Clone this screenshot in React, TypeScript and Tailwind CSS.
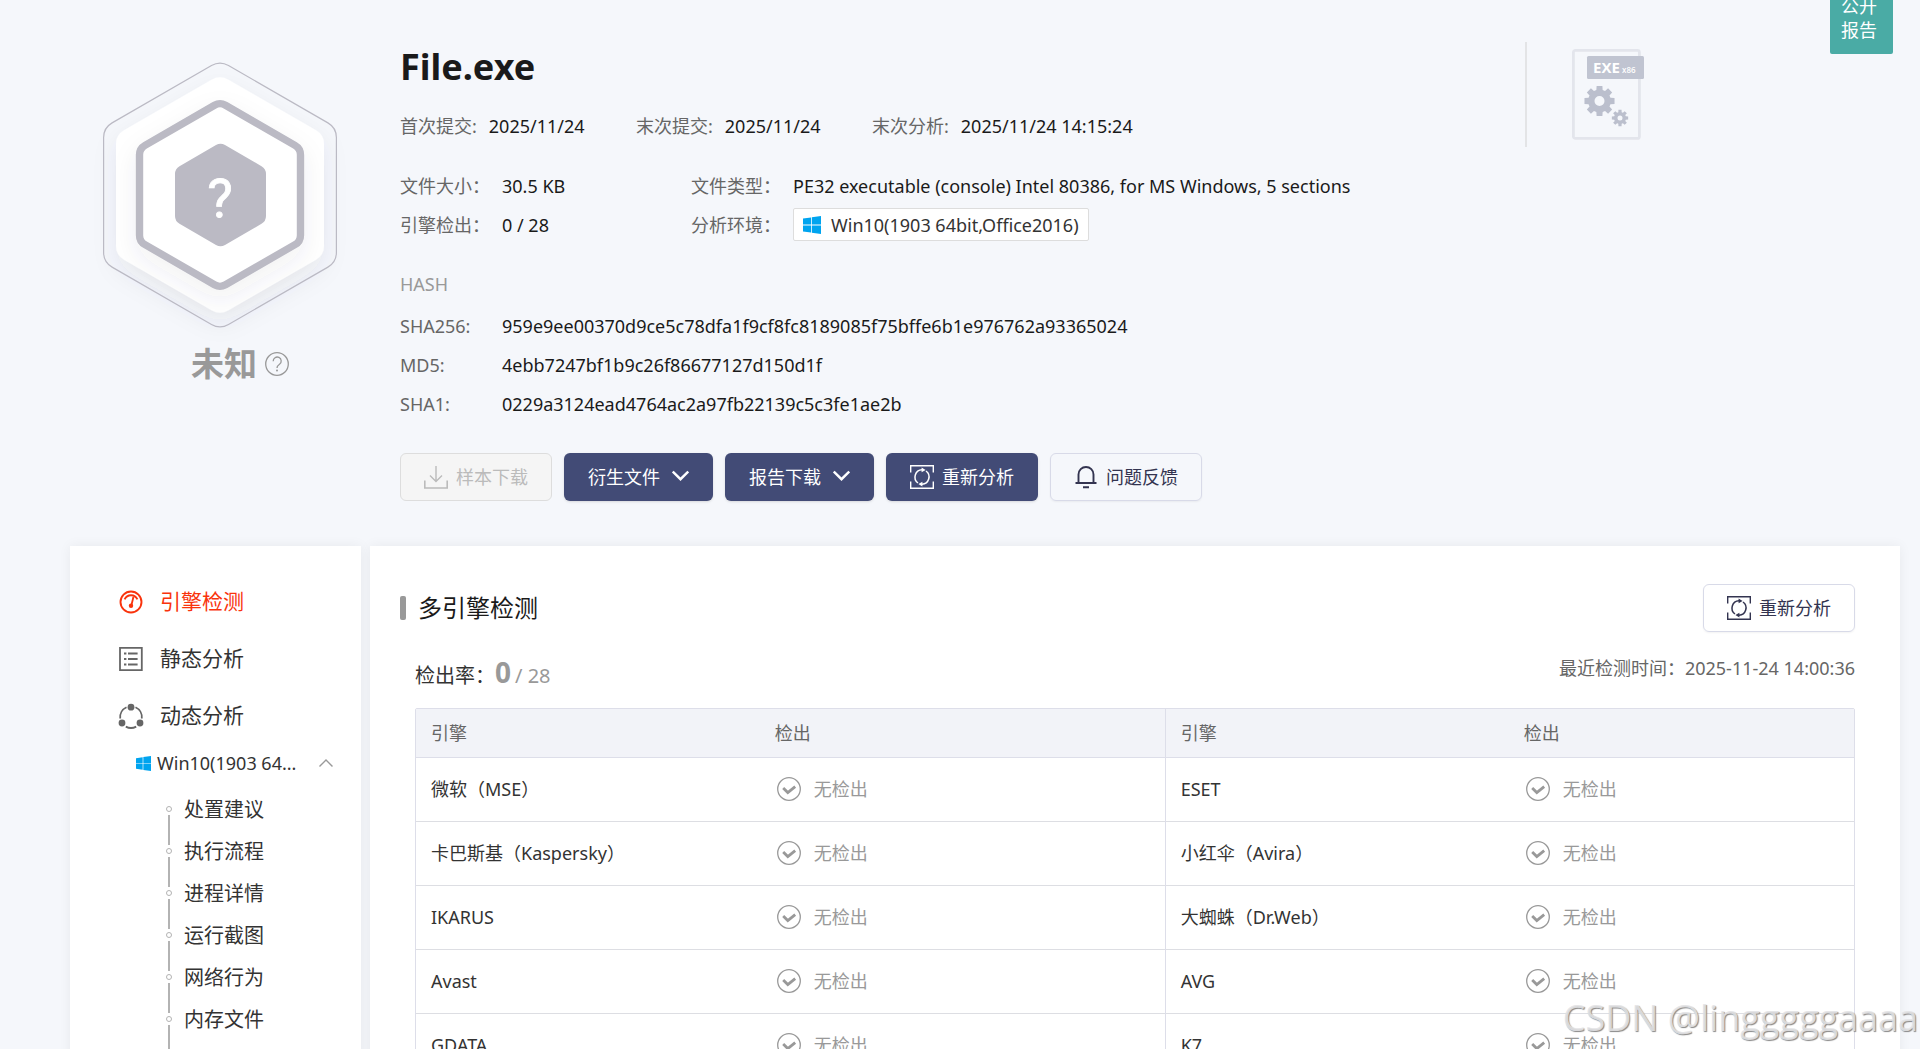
import type { ReactNode } from 'react';

const menuItems = ['处置建议', '执行流程', '进程详情', '运行截图', '网络行为', '内存文件'];

const engines = [
  ['微软（MSE）', 'ESET'],
  ['卡巴斯基（Kaspersky）', '小红伞（Avira）'],
  ['IKARUS', '大蜘蛛（Dr.Web）'],
  ['Avast', 'AVG'],
  ['GDATA', 'K7'],
];

const dates = [
  ['首次提交:', '2025/11/24'],
  ['末次提交:', '2025/11/24'],
  ['末次分析:', '2025/11/24 14:15:24'],
];

const hashes = [
  ['SHA256:', '959e9ee00370d9ce5c78dfa1f9cf8fc8189085f75bffe6b1e976762a93365024'],
  ['MD5:', '4ebb7247bf1b9c26f86677127d150d1f'],
  ['SHA1:', '0229a3124ead4764ac2a97fb22139c5c3fe1ae2b'],
];

// Pointy-top hexagon with rounded corners
function hexPath(cx: number, cy: number, halfWidth: number, radius: number) {
  const R = halfWidth / Math.cos(Math.PI / 6);
  const t = (radius * 0.577) / R;
  const points = Array.from({ length: 6 }, (_, i) => {
    const a = (Math.PI / 3) * i - Math.PI / 2;
    return [cx + R * Math.cos(a), cy + R * Math.sin(a)];
  });
  const mix = (a: number[], b: number[]) =>
    `${(a[0] + (b[0] - a[0]) * t).toFixed(2)} ${(a[1] + (b[1] - a[1]) * t).toFixed(2)}`;
  return (
    points
      .map((p, i) => {
        const prev = points[(i + 5) % 6];
        const next = points[(i + 1) % 6];
        return `${i === 0 ? 'M' : 'L'}${mix(p, prev)}A${radius} ${radius} 0 0 1 ${mix(p, next)}`;
      })
      .join('') + 'Z'
  );
}

function UnknownHexagon() {
  return (
    <svg className="w-[280px] h-[300px]" viewBox="80 50 280 300">
      <defs>
        <filter id="soft" x="-30%" y="-30%" width="160%" height="160%">
          <feDropShadow dx="0" dy="10" stdDeviation="12" floodColor="#50505a" floodOpacity="0.07" />
        </filter>
      </defs>
      <path d={hexPath(220, 195, 104, 16)} fill="#fff" filter="url(#soft)" />
      <path d={hexPath(220, 195, 116.4, 17)} fill="none" stroke="#bbbac4" strokeWidth="1.2" />
      <path d={hexPath(220, 195, 80.5, 11)} fill="#fff" stroke="#bbbac4" strokeWidth="7.4" filter="url(#soft)" />
      <path d={hexPath(220.5, 195, 45.5, 9)} fill="#bbbac4" />
      <text x="220" y="217" textAnchor="middle" fill="#fff" stroke="#fff" strokeWidth="0.8" fontSize="54" fontFamily="Roboto, sans-serif">?</text>
    </svg>
  );
}

function HelpIcon() {
  return (
    <svg className="w-6 h-6" viewBox="0 0 24 24">
      <circle cx="12" cy="12" r="11.3" fill="none" stroke="#999" strokeWidth="1.3" />
      <path d="M8.2 9.2a4 4 0 1 1 6.3 3.1c-1.7 1.2-2.5 2-2.5 3.8" fill="none" stroke="#999" strokeWidth="1.3" />
      <circle cx="12" cy="18.6" r="1" fill="#999" />
    </svg>
  );
}

function WindowsIcon({ className }: { className: string }) {
  return (
    <svg className={className} viewBox="0 0 18 18" fill="#00a4ef">
      <path d="M0 2.6L8 1.4V8.6H0zM8.8 1.3L18 0V8.6H8.8zM0 9.4H8V16.6L0 15.4zM8.8 9.4H18V18L8.8 16.7z" />
    </svg>
  );
}

function gearPath(cx: number, cy: number, outer: number, inner: number, hole: number) {
  const pts: string[] = [];
  for (let i = 0; i < 8; i++) {
    const a = (Math.PI / 4) * i;
    [
      [inner, -0.28],
      [outer, -0.19],
      [outer, 0.19],
      [inner, 0.28],
    ].forEach(([r, d]) => pts.push(`${(cx + r * Math.cos(a + d)).toFixed(2)} ${(cy + r * Math.sin(a + d)).toFixed(2)}`));
  }
  return `M${pts.join('L')}ZM${cx - hole} ${cy}a${hole} ${hole} 0 1 0 ${hole * 2} 0a${hole} ${hole} 0 1 0 ${-hole * 2} 0Z`;
}

function ExeIcon() {
  return (
    <svg className="w-[72px] h-[92px]" viewBox="0 0 72 92">
      <rect x="1.4" y="1.4" width="66" height="88" rx="2" fill="none" stroke="#e3e5ec" strokeWidth="2.8" />
      <rect x="15" y="7" width="57" height="23" rx="1.5" fill="#c0c4d1" />
      <text x="21" y="24" fill="#fff" fontSize="15" fontWeight="700" fontFamily="'Open Sans', sans-serif">EXE</text>
      <text x="50" y="24" fill="#fff" fontSize="8" fontWeight="600" fontFamily="'Open Sans', sans-serif">x86</text>
      <path d={gearPath(27.5, 52, 15.3, 11.4, 5)} fill="#bbbfcd" fillRule="evenodd" />
      <path d={gearPath(48, 69, 8.3, 6, 2.5)} fill="#bbbfcd" fillRule="evenodd" />
    </svg>
  );
}

function DownloadIcon() {
  return (
    <svg className="w-6 h-6" viewBox="0 0 24 24" fill="none" stroke="currentColor">
      <path d="M12 1v15M6 10.5l6 6 6-6" strokeWidth="1.4" />
      <path d="M.8 15.5V23H23.2V15.5" strokeWidth="1.6" />
    </svg>
  );
}

function ChevronIcon() {
  return (
    <svg className="w-[17px] h-6" viewBox="0 0 17 24" fill="none" stroke="currentColor" strokeWidth="2.4">
      <path d="M.8 6.5l7.7 7.7 7.7-7.7" />
    </svg>
  );
}

function ReanalyzeIcon() {
  return (
    <svg className="w-6 h-6" viewBox="0 0 24 24" fill="none" stroke="currentColor">
      <path d="M.7 7.5V.7H23.3V7.5M.7 16.5v6.8H23.3V16.5" strokeWidth="1.4" />
      <path d="M8 18A7.3 7.3 0 0 1 12 4.8M16 6a7.3 7.3 0 0 1-4 13.2" strokeWidth="1.5" />
      <path d="M11.6 2.4l4 2.6-4 2.3zM12.4 16.7l-4 2.3 4 2.6z" fill="currentColor" stroke="none" />
    </svg>
  );
}

function BellIcon() {
  return (
    <svg className="w-6 h-6" viewBox="0 0 24 24" fill="none" stroke="currentColor" strokeWidth="1.9">
      <path d="M4.5 18V9.5a7.5 7.5 0 0 1 15 0V18M1.5 18h21M9 22.2h6" />
    </svg>
  );
}

function GaugeIcon() {
  return (
    <svg className="w-6 h-6" viewBox="0 0 24 24" fill="none" stroke="currentColor">
      <circle cx="12" cy="12" r="10.5" strokeWidth="1.9" />
      <path d="M5.6 9.4a7 7 0 0 1 12.8 0" strokeWidth="1.9" />
      <path d="M14.4 7L12.2 16" strokeWidth="1.8" />
      <circle cx="12" cy="15.8" r="2.2" fill="currentColor" stroke="none" />
    </svg>
  );
}

function ListIcon() {
  return (
    <svg className="w-6 h-6" viewBox="0 0 24 24" fill="none" stroke="#666" strokeWidth="1.8">
      <path d="M1 .9H22.8V23.1H1z" />
      <path d="M5 6.5h2.4M9 6.5h9.6M5 12h2.4M9 12h9.6M5 17.5h2.4M9 17.5h9.6" />
    </svg>
  );
}

function FlowIcon() {
  return (
    <svg className="w-6 h-6 overflow-visible" viewBox="0 0 24 24">
      <g fill="none" stroke="#666" strokeWidth="1.8">
        <path d="M7.5 3.2A11 11 0 0 0 1.2 14.5M16.5 3.2a11 11 0 0 1 6.3 11.3M6.8 22.6a11 11 0 0 0 10.4 0" />
      </g>
      <g fill="#666">
        <circle cx="12" cy="3.2" r="3.4" />
        <circle cx="3" cy="19" r="3.4" />
        <circle cx="21" cy="19" r="3.4" />
      </g>
    </svg>
  );
}

function CheckIcon() {
  return (
    <svg className="w-6 h-6 shrink-0" viewBox="0 0 24 24" fill="none" stroke="#999">
      <circle cx="12" cy="12" r="11.3" strokeWidth="1.3" />
      <path d="M6.2 11l4.6 4.6 7.4-6" strokeWidth="2.8" />
    </svg>
  );
}

function Field({ label, children }: { label: string; children: ReactNode }) {
  return (
    <div className="flex items-center">
      <dt className="w-[102px] shrink-0 text-[#666]">{label}</dt>
      <dd>{children}</dd>
    </div>
  );
}

function NoDetection() {
  return (
    <span className="flex items-center gap-[13px] text-[#999]">
      <CheckIcon />
      无检出
    </span>
  );
}

export default function App() {
  return (
    <div className="relative h-screen overflow-hidden bg-[#f5f7fb] font-['Noto_Sans','Noto_Sans_CJK_SC',sans-serif] text-lg text-[#1a1a1a]">
      {/* File summary */}
      <header className="flex items-start pl-20 pr-[276px]">
        <div className="w-[280px] shrink-0 flex flex-col items-center pt-[50px] mr-10">
          <UnknownHexagon />
          <div className="flex items-center gap-2 ml-10 -mt-2 h-11">
            <span className="text-[33px] leading-[44px] font-bold text-[#999]">未知</span>
            <button aria-label="帮助">
              <HelpIcon />
            </button>
          </div>
        </div>

        <div className="flex-1 pt-[41px]">
          <h1 className="text-[36px] leading-[52px] font-bold">File.exe</h1>

          <dl className="grid grid-cols-[236px_236px_1fr] mt-[18px] leading-[30px]">
            {dates.map(([name, value]) => (
              <div key={name} className="flex gap-3">
                <dt className="text-[#666]">{name}</dt>
                <dd>{value}</dd>
              </div>
            ))}
          </dl>

          <dl className="grid grid-cols-[291px_1fr] auto-rows-[33px] gap-y-1.5 mt-7">
            <Field label="文件大小：">30.5 KB</Field>
            <Field label="文件类型：">PE32 executable (console) Intel 80386, for MS Windows, 5 sections</Field>
            <Field label="引擎检出：">0 / 28</Field>
            <Field label="分析环境：">
              <span className="flex items-center gap-2.5 h-[33px] px-[9px] bg-white border border-[#ddd] rounded-xs text-[#333]">
                <WindowsIcon className="w-[18px] h-[18px]" />
                Win10(1903 64bit,Office2016)
              </span>
            </Field>
          </dl>

          <h2 className="mt-7 leading-[30px] text-[#999]">HASH</h2>
          <dl className="mt-2 leading-[39px]">
            {hashes.map(([name, value]) => (
              <Field key={name} label={name}>
                {value}
              </Field>
            ))}
          </dl>

          <div className="flex gap-3 mt-[29px] h-12">
            <button disabled className="flex items-center gap-2 px-[23px] rounded-md border border-[#ddd] bg-[#f5f5f5] text-[#bbb]">
              <DownloadIcon />
              样本下载
            </button>
            <button className="flex items-center gap-3 px-6 rounded-md bg-[#424b76] text-white shadow-sm">
              衍生文件
              <ChevronIcon />
            </button>
            <button className="flex items-center gap-3 px-6 rounded-md bg-[#424b76] text-white shadow-sm">
              报告下载
              <ChevronIcon />
            </button>
            <button className="flex items-center gap-2 px-6 rounded-md bg-[#424b76] text-white shadow-sm">
              <ReanalyzeIcon />
              重新分析
            </button>
            <button className="flex items-center gap-2 px-[23px] rounded-md border border-[#d8dae8] text-[#333450] shadow-xs">
              <BellIcon />
              问题反馈
            </button>
          </div>
        </div>

        <div className="mt-[42px] h-[105px] pl-[45px] pt-[7px] border-l-2 border-[#e3e4e6]">
          <ExeIcon />
        </div>
      </header>

      <a href="#public" className="absolute -top-3.5 right-[27px] w-[63px] px-[11px] pt-2 pb-3 leading-6 rounded-xs bg-[#4aaba5] text-white">
        公开报告
      </a>

      {/* Report body */}
      <div className="flex items-stretch gap-[9px] mt-[45px] pl-[70px] pr-5">
        <nav className="w-[291px] shrink-0 bg-white pl-[49px] pt-[27px] shadow-[0_0_12px_rgba(0,0,0,0.06)]">
          <a href="#engine" className="flex items-center gap-[17px] h-[57px] text-[21px] text-[#f9330c]">
            <GaugeIcon />
            引擎检测
          </a>
          <a href="#static" className="flex items-center gap-[17px] h-[57px] text-[21px] text-[#333]">
            <ListIcon />
            静态分析
          </a>
          <a href="#dynamic" className="flex items-center gap-[17px] h-[57px] text-[21px] text-[#333]">
            <FlowIcon />
            动态分析
          </a>
          <button className="flex items-center w-full h-[38px] pl-[17px] pr-7 text-[#333]">
            <WindowsIcon className="w-[15px] h-[15px]" />
            <span className="ml-1.5">Win10(1903 64...</span>
            <svg className="w-3.5 h-2 ml-auto" viewBox="0 0 14 8" fill="none" stroke="#999" strokeWidth="1.4">
              <path d="M.5 7.5L7 1l6.5 6.5" />
            </svg>
          </button>
          <ul className="pl-[47px] pt-[7px]">
            {menuItems.map((item) => (
              <li key={item} className="flex gap-3 h-[42px] text-xl leading-[42px]">
                <span className="flex flex-col items-center w-1.5 pt-[17px]">
                  <span className="w-1.5 h-1.5 shrink-0 rounded-full border border-[#b3b3b3]" />
                  <span className="w-0.5 h-[30px] my-[3px] shrink-0 bg-[#b3b3b3]" />
                </span>
                <a href="#section" className="text-[#333]">
                  {item}
                </a>
              </li>
            ))}
          </ul>
        </nav>

        <main className="flex-1 bg-white pl-[30px] pr-[45px] pt-[38px] shadow-[0_0_12px_rgba(0,0,0,0.06)]">
          <div className="flex items-center justify-between">
            <h2 className="flex items-center gap-3 text-2xl">
              <span className="w-1.5 h-6 rounded-xs bg-[#999]" />
              多引擎检测
            </h2>
            <button className="flex items-center gap-2 h-12 px-[23px] rounded-md border border-[#d8dae8] text-[#333450] shadow-xs">
              <ReanalyzeIcon />
              重新分析
            </button>
          </div>

          <div className="flex justify-between pl-[15px] h-[76px] pt-[21px]">
            <p className="flex items-baseline text-xl leading-[38px] text-[#333]">
              检出率：
              <span className="text-[28px] font-bold text-[#999]">0</span>
              <span className="ml-1 text-[#999]">/ 28</span>
            </p>
            <p className="leading-[30px] text-[#666]">最近检测时间：2025-11-24 14:00:36</p>
          </div>

          <div className="ml-[15px] border border-[#dddee9] rounded-xs">
            <table className="w-full table-fixed text-left">
              <colgroup>
                <col className="w-[23.9%]" />
                <col className="w-[28.2%]" />
                <col className="w-[23.9%]" />
                <col />
              </colgroup>
              <thead className="bg-[#f2f3f8] text-[#666]">
                <tr className="h-12 border-b border-[#dddee9]">
                  <th className="px-[15px] font-normal">引擎</th>
                  <th className="px-[15px] font-normal">检出</th>
                  <th className="px-[15px] font-normal border-l border-[#dddee9]">引擎</th>
                  <th className="px-[15px] font-normal">检出</th>
                </tr>
              </thead>
              <tbody className="text-[#333]">
                {engines.map(([left, right]) => (
                  <tr key={left} className="h-16 border-b border-[#dddee3]">
                    <td className="px-[15px]">{left}</td>
                    <td className="px-[17px]">
                      <NoDetection />
                    </td>
                    <td className="px-[15px] border-l border-[#dddee9]">{right}</td>
                    <td className="px-[17px]">
                      <NoDetection />
                    </td>
                  </tr>
                ))}
              </tbody>
            </table>
          </div>
        </main>
      </div>

      <span className="absolute right-0.5 bottom-1.5 font-['Open_Sans',sans-serif] text-[36px] leading-[50px] text-[#e4e4e6]/90 [text-shadow:1px_1px_1px_#888]">
        CSDN @lingggggaaaa
      </span>
    </div>
  );
}
